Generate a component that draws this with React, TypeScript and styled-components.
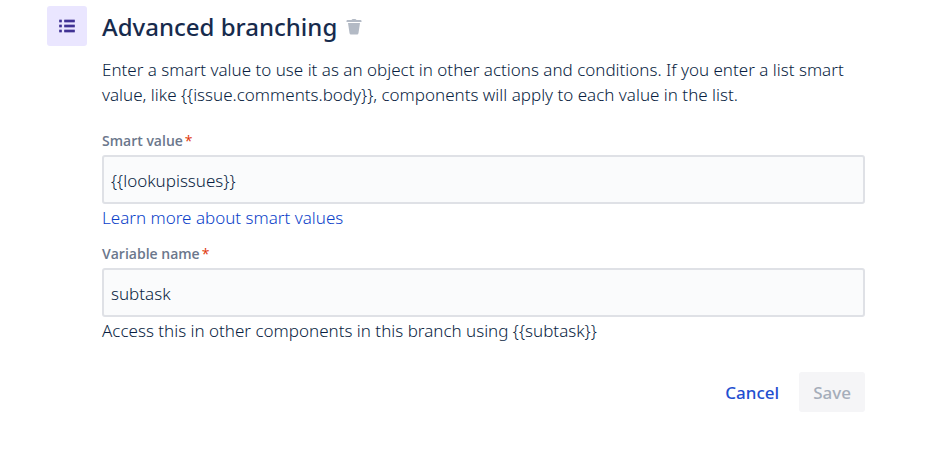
import React from 'react';
import styled, { createGlobalStyle } from 'styled-components';

const GlobalStyle = createGlobalStyle`
  * { box-sizing: border-box; }
  body { margin: 0; background: #fff; color: #091e42; font-family: 'Noto Sans', 'Open Sans', sans-serif; font-size: 17px; font-weight: 300; }
`;

const Panel = styled.main`
  display: grid;
  grid-template-columns: 40px minmax(0, 1fr);
  column-gap: 15px;
  padding: 6px 80px 24px 47px;
`;

const IconTile = styled.div`
  display: flex;
  align-items: center;
  justify-content: center;
  width: 40px;
  height: 40px;
  border-radius: 3px;
  background: #eae6ff;
`;

const Header = styled.header`
  display: flex;
  align-items: center;
  gap: 9px;
  height: 42px;
`;

const Title = styled.h1`
  margin: 0;
  color: #172b4d;
  font-size: 24px;
  font-weight: 500;
  line-height: 32px;
`;

const IconButton = styled.button`
  display: flex;
  padding: 0;
  border: 0;
  background: none;
  cursor: pointer;
`;

const Description = styled.p`
  margin: 9px 0 24px;
  line-height: 25px;
`;

const Field = styled.div`
  display: flex;
  flex-direction: column;
  align-items: flex-start;
  margin-bottom: 14px;
`;

const Label = styled.label`
  margin-bottom: 4px;
  color: #6b778c;
  font-family: 'Open Sans', 'Noto Sans', sans-serif;
  font-size: 14px;
  font-weight: 600;
  line-height: 20px;
`;

const Required = styled.span`
  margin-left: 2px;
  color: #de350b;
  font-weight: 400;
`;

const TextInput = styled.input`
  width: 100%;
  height: 49px;
  padding: 2px 7px 0;
  border: 2px solid #dfe1e6;
  border-radius: 3px;
  background: #fafbfc;
  color: inherit;
  font: inherit;
`;

const Hint = styled.div`
  margin-top: 2px;
  line-height: 24px;
`;

const Link = styled.a`
  color: #0b3fc9;
  text-decoration: none;
`;

const Actions = styled.footer`
  display: flex;
  justify-content: flex-end;
  gap: 6px;
  margin-top: 29px;
`;

const Button = styled.button<{ $filled?: boolean }>`
  height: 40px;
  padding: 0 14px;
  border: 0;
  border-radius: 3px;
  background: ${(p) => (p.$filled ? '#f5f5f7' : 'transparent')};
  color: ${(p) => (p.$filled ? '#a5adba' : '#1f4fd0')};
  font: inherit;
  font-weight: 500;
`;

export default function App() {
  return (
    <>
      <GlobalStyle />
      <Panel>
        <IconTile>
          <svg width="18" height="16" viewBox="0 0 18 16" fill="#403294" aria-hidden="true">
            <rect x="1" y="2" width="3" height="2" rx="1" />
            <rect x="6" y="2" width="11" height="2" rx="1" />
            <rect x="1" y="7" width="3" height="2" rx="1" />
            <rect x="6" y="7" width="11" height="2" rx="1" />
            <rect x="1" y="12" width="3" height="2" rx="1" />
            <rect x="6" y="12" width="11" height="2" rx="1" />
            <g opacity="0.35">
              <rect x="1" y="1" width="3" height="4" rx="1" />
              <rect x="6" y="1" width="11" height="4" rx="1" />
              <rect x="1" y="6" width="3" height="4" rx="1" />
              <rect x="6" y="6" width="11" height="4" rx="1" />
              <rect x="1" y="11" width="3" height="4" rx="1" />
              <rect x="6" y="11" width="11" height="4" rx="1" />
            </g>
          </svg>
        </IconTile>
        <div>
          <Header>
            <Title>Advanced branching</Title>
            <IconButton type="button" aria-label="Delete component">
              <svg width="16" height="18" viewBox="0 0 16 18" fill="#b3bac5" aria-hidden="true">
                <path d="M.5 3q0-1 1-1h4q.5-1 1.500-1h2q1 0 1.500 1h4q1 0 1 1v1H.5zM2 5h12l-1.500 10q-.2 1.500-1.500 1.500H5q-1.300 0-1.500-1.500z" />
              </svg>
            </IconButton>
          </Header>
          <Description>
            {'Enter a smart value to use it as an object in other actions and conditions. If you enter a list smart value, like {{issue.comments.body}}, components will apply to each value in the list.'}
          </Description>
          <Field>
            <Label htmlFor="smart-value">Smart value<Required>*</Required></Label>
            <TextInput id="smart-value" defaultValue="{{lookupissues}}" required />
            <Hint><Link href="#smart-values">Learn more about smart values</Link></Hint>
          </Field>
          <Field>
            <Label htmlFor="variable-name">Variable name<Required>*</Required></Label>
            <TextInput id="variable-name" defaultValue="subtask" required />
            <Hint>{'Access this in other components in this branch using {{subtask}}'}</Hint>
          </Field>
          <Actions>
            <Button type="button">Cancel</Button>
            <Button type="submit" $filled disabled>Save</Button>
          </Actions>
        </div>
      </Panel>
    </>
  );
}
